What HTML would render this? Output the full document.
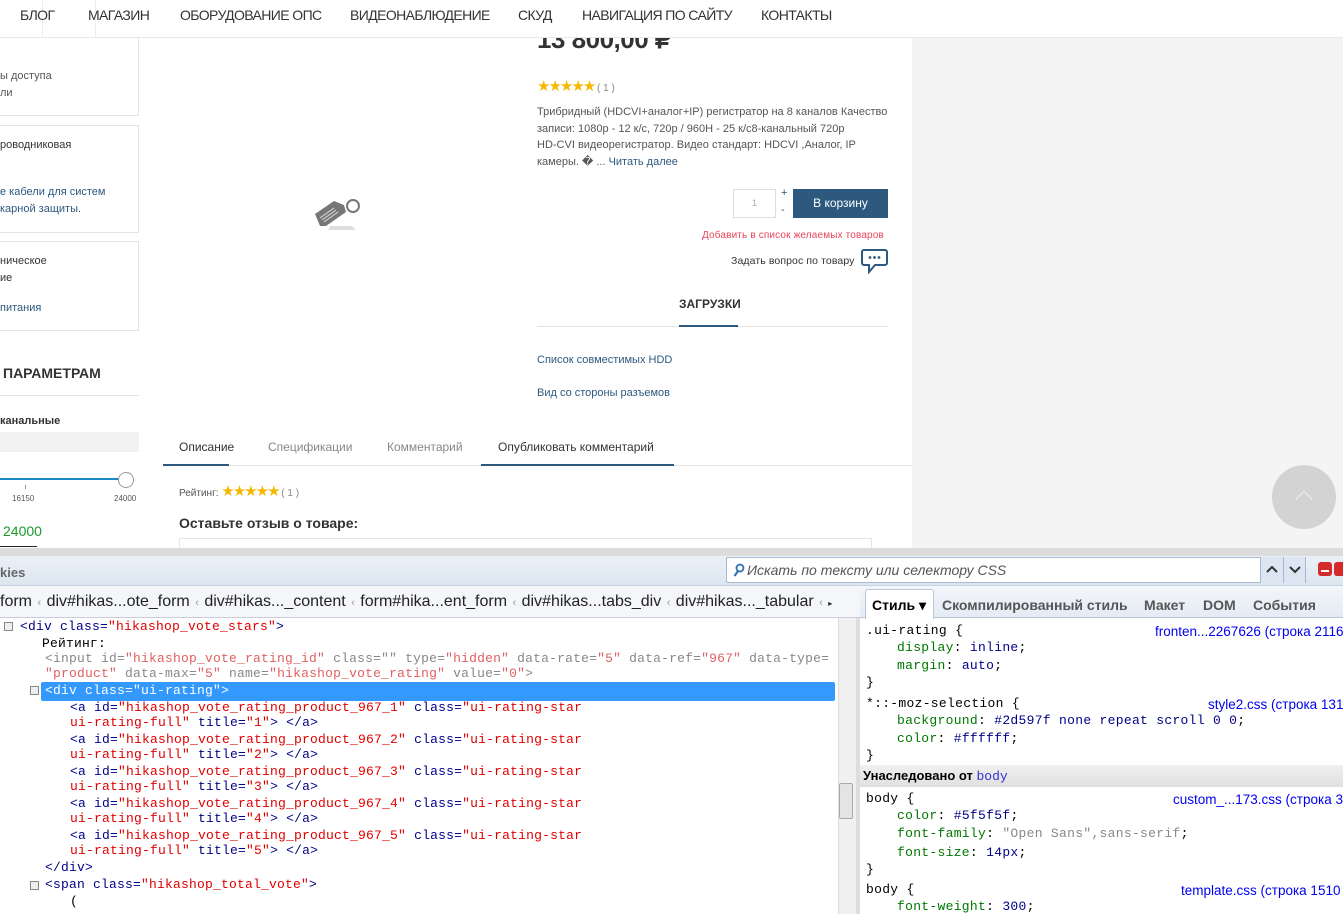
<!DOCTYPE html>
<html><head><meta charset="utf-8">
<style>
*{margin:0;padding:0;box-sizing:border-box}
body{width:1343px;height:914px;overflow:hidden;background:#fff;font-family:"Liberation Sans",sans-serif;position:relative}
.a{position:absolute;white-space:nowrap}
.nav{font-size:14px;color:#333;top:7px;letter-spacing:-0.6px}
.s{font-size:11px;color:#555}
.lnk{color:#2d597f}
.box{position:absolute;border:1px solid #e5e5e5;border-left:none;background:#fff}
.star{color:#f5b800;font-size:15px;letter-spacing:-2px}
.code{font-family:"Liberation Mono",monospace;font-size:13px;letter-spacing:0.2px;color:#000088;position:absolute;white-space:nowrap;line-height:16px}
.r{color:#e00000}
.css{font-family:"Liberation Mono",monospace;font-size:13px;letter-spacing:0.3px;position:absolute;white-space:nowrap;color:#000}
.p{color:#007700}.v{color:#000088}
.src{font-family:"Liberation Sans",sans-serif;color:#0000ee;font-size:13.5px;position:absolute;white-space:nowrap}
.sep{color:#999;font-size:11px}
</style></head><body>
<div class="a" style="left:912px;top:38px;width:431px;height:510px;background:#f4f4f4"></div>
<div class="a" style="left:1272px;top:465px;width:64px;height:64px;border-radius:50%;background:#d3d3d3"></div>
<div class="a" style="left:1298px;top:493px;width:12px;height:12px;border-left:1px solid #eee;border-top:1px solid #eee;transform:rotate(45deg)"></div>
<!-- nav -->
<div class="a" style="left:0;top:0;width:1343px;height:38px;border-bottom:1px solid #e8e8e8;background:#fff"></div>
<div class="a" style="left:42px;top:0;width:1px;height:37px;background:#eee"></div>
<div class="a" style="left:95px;top:0;width:1px;height:37px;background:#eee"></div>
<div class="a nav" style="left:20px">БЛОГ</div>
<div class="a nav" style="left:88px">МАГАЗИН</div>
<div class="a nav" style="left:180px">ОБОРУДОВАНИЕ ОПС</div>
<div class="a nav" style="left:350px">ВИДЕОНАБЛЮДЕНИЕ</div>
<div class="a nav" style="left:518px">СКУД</div>
<div class="a nav" style="left:582px">НАВИГАЦИЯ ПО САЙТУ</div>
<div class="a nav" style="left:761px">КОНТАКТЫ</div>
<!-- left column -->
<div class="box" style="left:0;top:38px;width:139px;height:78px;border-top:none"></div>
<div class="a s" style="left:0;top:70px">ы доступа</div>
<div class="a s" style="left:0;top:87px">ли</div>
<div class="box" style="left:0;top:125px;width:139px;height:108px"></div>
<div class="a s" style="left:0;top:139px;color:#333">роводниковая</div>
<div class="a s lnk" style="left:0;top:186px">е кабели для систем</div>
<div class="a s lnk" style="left:0;top:203px">карной защиты.</div>
<div class="box" style="left:0;top:241px;width:139px;height:90px"></div>
<div class="a s" style="left:0;top:255px;color:#333">ническое</div>
<div class="a s" style="left:0;top:272px;color:#333">ие</div>
<div class="a s lnk" style="left:0;top:302px">питания</div>
<div class="a" style="left:3px;top:365px;font-size:14px;font-weight:bold;color:#333">ПАРАМЕТРАМ</div>
<div class="a" style="left:0;top:395px;width:139px;height:1px;background:#e5e5e5"></div>
<div class="a s" style="left:0;top:415px;color:#333;font-weight:bold">канальные</div>
<div class="a" style="left:0;top:432px;width:139px;height:20px;background:#f2f2f2"></div>
<div class="a" style="left:0;top:478px;width:126px;height:2px;background:#1a8ac6"></div>
<div class="a" style="left:118px;top:472px;width:16px;height:16px;border-radius:50%;background:#fff;border:1px solid #999"></div>
<div class="a" style="left:25px;top:485px;width:1px;height:4px;background:#999"></div>
<div class="a" style="left:12px;top:494px;font-size:8px;color:#555">16150</div>
<div class="a" style="left:114px;top:494px;font-size:8px;color:#555">24000</div>
<div class="a" style="left:3px;top:523px;font-size:14px;color:#1a9a2a">24000</div>
<div class="a" style="left:0;top:546px;width:37px;height:1px;background:#222"></div>
<!-- product image -->
<svg class="a" style="left:312px;top:196px" width="52" height="34" viewBox="0 0 52 34"><path d="M18 30 L40 30 L44 34 L16 34Z" fill="#ddd"/><path d="M3 18 L22 5 L32 9 L34 16 L14 30 L8 30Z" fill="#777"/><path d="M8 22l14-10M10 24l14-10M12 26l14-10" stroke="#ddd" stroke-width="1"/><circle cx="41" cy="10" r="6" fill="none" stroke="#777" stroke-width="2"/></svg>
<!-- product info -->
<div class="a" style="left:537px;top:38px;width:200px;height:18px;overflow:hidden"><div style="position:absolute;left:0;top:-14px;font-size:26px;font-weight:bold;color:#333;letter-spacing:-0.5px">13 800,00 ₽</div></div>
<div class="a" style="left:537px;top:77px"><span class="star">★★★★★</span><span style="font-size:10px;color:#888"> ( 1 )</span></div>
<div class="a" style="left:537px;top:104px;font-size:11px;color:#555;line-height:16.5px">Трибридный (HDCVI+аналог+IP) регистратор на 8 каналов Качество<br>записи: 1080p - 12 к/с, 720p / 960H - 25 к/с8-канальный 720p<br>HD-CVI видеорегистратор. Видео стандарт: HDCVI ,Аналог, IP<br>камеры. � ... <span class="lnk">Читать далее</span></div>
<div class="a" style="left:733px;top:189px;width:43px;height:29px;border:1px solid #ddd;font-size:9px;color:#aaa;text-align:center;line-height:27px">1</div>
<div class="a" style="left:781px;top:187px;font-size:11px;color:#2d597f">+</div>
<div class="a" style="left:781px;top:204px;font-size:11px;color:#2d597f">-</div>
<div class="a" style="left:793px;top:189px;width:95px;height:29px;background:#2d597f;color:#fff;font-size:12px;text-align:center;line-height:29px">В корзину</div>
<div class="a" style="left:702px;top:230px;font-size:10px;color:#e8445a;letter-spacing:0.15px">Добавить в список желаемых товаров</div>
<div class="a" style="left:731px;top:255px;font-size:10.5px;color:#333;letter-spacing:0.1px">Задать вопрос по товару</div>
<svg class="a" style="left:861px;top:248px" width="27" height="26" viewBox="0 0 27 26"><path d="M3 2h21a2 2 0 0 1 2 2v11a2 2 0 0 1-2 2H14l-6 7v-7H3a2 2 0 0 1-2-2V4a2 2 0 0 1 2-2z" fill="#fff" stroke="#2d597f" stroke-width="2"/><circle cx="9" cy="9.5" r="1.4" fill="#2d597f"/><circle cx="13.5" cy="9.5" r="1.4" fill="#2d597f"/><circle cx="18" cy="9.5" r="1.4" fill="#2d597f"/></svg>
<div class="a" style="left:679px;top:297px;font-size:12px;font-weight:bold;color:#333">ЗАГРУЗКИ</div>
<div class="a" style="left:537px;top:326px;width:351px;height:1px;background:#e5e5e5"></div>
<div class="a" style="left:679px;top:325px;width:59px;height:2px;background:#2d597f"></div>
<div class="a s lnk" style="left:537px;top:354px">Список совместимых HDD</div>
<div class="a s lnk" style="left:537px;top:387px">Вид со стороны разъемов</div>
<!-- tabs -->
<div class="a" style="left:163px;top:465px;width:749px;height:1px;background:#e5e5e5"></div>
<div class="a" style="left:163px;top:464px;width:66px;height:2px;background:#2d597f"></div>
<div class="a" style="left:481px;top:464px;width:193px;height:2px;background:#2d597f"></div>
<div class="a" style="left:179px;top:440px;font-size:12px;color:#333">Описание</div>
<div class="a" style="left:268px;top:440px;font-size:12px;color:#888">Спецификации</div>
<div class="a" style="left:387px;top:440px;font-size:12px;color:#888">Комментарий</div>
<div class="a" style="left:498px;top:440px;font-size:12px;color:#333">Опубликовать комментарий</div>
<div class="a" style="left:179px;top:482px;font-size:10px;color:#555">Рейтинг: <span class="star">★★★★★</span><span style="color:#888"> ( 1 )</span></div>
<div class="a" style="left:179px;top:515px;font-size:14px;font-weight:bold;color:#333">Оставьте отзыв о товаре:</div>
<div class="a" style="left:179px;top:538px;width:693px;height:12px;border:1px solid #e5e5e5"></div>
<!-- devtools -->
<div class="a" style="left:0;top:548px;width:1343px;height:8px;background:#dcdcdc"></div>
<div class="a" style="left:0;top:556px;width:1343px;height:30px;background:linear-gradient(#eaf0f7,#dde6f0);border-bottom:1px solid #c8d4e2"></div>
<div class="a" style="left:0;top:565px;font-size:13px;font-weight:bold;color:#666">kies</div>
<div class="a" style="left:726px;top:557px;width:580px;height:26px;background:#fff;border:1px solid #a9b8cc;border-radius:2px"></div>
<svg class="a" style="left:733px;top:563px" width="12" height="14" viewBox="0 0 12 14"><circle cx="7" cy="5" r="3.5" fill="none" stroke="#2d6fb0" stroke-width="1.8"/><path d="M5 8L1.5 13" stroke="#2d6fb0" stroke-width="2"/></svg>
<div class="a" style="left:747px;top:562px;font-size:14px;font-style:italic;color:#555">Искать по тексту или селектору CSS</div>
<div class="a" style="left:1260px;top:557px;width:46px;height:26px;background:#dbe6f2;border-left:1px solid #a9b8cc;border-right:1px solid #a9b8cc"></div>
<svg class="a" style="left:1266px;top:565px" width="12" height="8"><path d="M1 7l5-5 5 5" fill="none" stroke="#333" stroke-width="2"/></svg>
<div class="a" style="left:1283px;top:557px;width:1px;height:26px;background:#a9b8cc"></div>
<svg class="a" style="left:1289px;top:566px" width="12" height="8"><path d="M1 1l5 5 5-5" fill="none" stroke="#333" stroke-width="2"/></svg>
<div class="a" style="left:1318px;top:562px;width:14px;height:14px;background:#d42a2a;border-radius:3px"></div>
<div class="a" style="left:1321px;top:570px;width:8px;height:2px;background:#fff"></div>
<div class="a" style="left:1334px;top:562px;width:14px;height:14px;background:#d42a2a;border-radius:3px"></div>
<div class="a" style="left:0;top:586px;width:860px;height:32px;background:#f4f6fa;border-bottom:1px solid #ccd"></div>
<div class="a" style="left:0;top:593px;font-size:16px;color:#222;word-spacing:1px">form <span class="sep">‹</span> div#hikas...ote_form <span class="sep">‹</span> div#hikas..._content <span class="sep">‹</span> form#hika...ent_form <span class="sep">‹</span> div#hikas...tabs_div <span class="sep">‹</span> div#hikas..._tabular <span class="sep">‹</span> <span style="font-size:8px">▸</span></div>
<div class="a" style="left:860px;top:586px;width:483px;height:32px;background:linear-gradient(#f3f6fa,#e4ebf4);border-bottom:1px solid #b8c6d8"></div>
<div class="a" style="left:865px;top:589px;width:69px;height:30px;background:#fff;border:1px solid #b8c6d8;border-bottom:none;border-radius:3px 3px 0 0"></div>
<div class="a" style="left:872px;top:597px;font-size:14px;font-weight:bold;color:#000">Стиль ▾</div>
<div class="a" style="left:942px;top:597px;font-size:14px;font-weight:bold;color:#555">Скомпилированный стиль</div>
<div class="a" style="left:1144px;top:597px;font-size:14px;font-weight:bold;color:#555">Макет</div>
<div class="a" style="left:1203px;top:597px;font-size:14px;font-weight:bold;color:#555">DOM</div>
<div class="a" style="left:1253px;top:597px;font-size:14px;font-weight:bold;color:#555">События</div>
<!-- html panel -->
<div class="a" style="left:838px;top:618px;width:18px;height:296px;background:#f0f0f0;border-left:1px solid #ddd"></div>
<div class="a" style="left:839px;top:783px;width:14px;height:36px;background:#e4e4e4;border:1px solid #aaa;border-radius:2px"></div>
<div class="a" style="left:856px;top:618px;width:4px;height:296px;background:#ddd"></div>
<div class="a" style="left:41px;top:682px;width:794px;height:19px;background:#3399ff;border-radius:2px"></div>
<div class="a" style="left:4px;top:622px;width:9px;height:9px;border:1px solid #888;background:#eee"></div>
<div class="a" style="left:30px;top:686px;width:9px;height:9px;border:1px solid #888;background:#eee"></div>
<div class="a" style="left:30px;top:881px;width:9px;height:9px;border:1px solid #888;background:#eee"></div>
<div class="code" style="left:20px;top:619px">&lt;div class=<span class="r">"hikashop_vote_stars"</span>&gt;</div>
<div class="code" style="left:42px;top:636px;color:#000">Рейтинг:</div>
<div class="code" style="left:45px;top:651px;color:#888">&lt;input id=<span style="color:#e06060">"hikashop_vote_rating_id"</span> class="" type=<span style="color:#e06060">"hidden"</span> data-rate=<span style="color:#e06060">"5"</span> data-ref=<span style="color:#e06060">"967"</span> data-type=</div>
<div class="code" style="left:45px;top:666px;color:#888"><span style="color:#e06060">"product"</span> data-max=<span style="color:#e06060">"5"</span> name=<span style="color:#e06060">"hikashop_vote_rating"</span> value=<span style="color:#e06060">"0"</span>&gt;</div>
<div class="code" style="left:45px;top:683px;color:#fff">&lt;div class="ui-rating"&gt;</div>
<div class="code" style="left:70px;top:700px">&lt;a id=<span class="r">"hikashop_vote_rating_product_967_1"</span> class=<span class="r">"ui-rating-star</span></div>
<div class="code" style="left:70px;top:715px"><span class="r">ui-rating-full"</span> title=<span class="r">"1"</span>&gt; &lt;/a&gt;</div>
<div class="code" style="left:70px;top:732px">&lt;a id=<span class="r">"hikashop_vote_rating_product_967_2"</span> class=<span class="r">"ui-rating-star</span></div>
<div class="code" style="left:70px;top:747px"><span class="r">ui-rating-full"</span> title=<span class="r">"2"</span>&gt; &lt;/a&gt;</div>
<div class="code" style="left:70px;top:764px">&lt;a id=<span class="r">"hikashop_vote_rating_product_967_3"</span> class=<span class="r">"ui-rating-star</span></div>
<div class="code" style="left:70px;top:779px"><span class="r">ui-rating-full"</span> title=<span class="r">"3"</span>&gt; &lt;/a&gt;</div>
<div class="code" style="left:70px;top:796px">&lt;a id=<span class="r">"hikashop_vote_rating_product_967_4"</span> class=<span class="r">"ui-rating-star</span></div>
<div class="code" style="left:70px;top:811px"><span class="r">ui-rating-full"</span> title=<span class="r">"4"</span>&gt; &lt;/a&gt;</div>
<div class="code" style="left:70px;top:828px">&lt;a id=<span class="r">"hikashop_vote_rating_product_967_5"</span> class=<span class="r">"ui-rating-star</span></div>
<div class="code" style="left:70px;top:843px"><span class="r">ui-rating-full"</span> title=<span class="r">"5"</span>&gt; &lt;/a&gt;</div>
<div class="code" style="left:45px;top:860px">&lt;/div&gt;</div>
<div class="code" style="left:45px;top:877px">&lt;span class=<span class="r">"hikashop_total_vote"</span>&gt;</div>
<div class="code" style="left:70px;top:894px;color:#000">(</div>
<!-- css panel -->
<div class="css" style="left:866px;top:623px">.ui-rating {</div>
<div class="css" style="left:897px;top:640px"><span class="p">display</span>: <span class="v">inline</span>;</div>
<div class="css" style="left:897px;top:658px"><span class="p">margin</span>: <span class="v">auto</span>;</div>
<div class="css" style="left:866px;top:675px">}</div>
<div class="src" style="left:1155px;top:624px">fronten...2267626 (строка 2116</div>
<div class="css" style="left:866px;top:696px">*::-moz-selection {</div>
<div class="src" style="left:1208px;top:697px">style2.css (строка 131</div>
<div class="css" style="left:897px;top:713px"><span class="p">background</span>: <span class="v">#2d597f none repeat scroll 0 0</span>;</div>
<div class="css" style="left:897px;top:731px"><span class="p">color</span>: <span class="v">#ffffff</span>;</div>
<div class="css" style="left:866px;top:748px">}</div>
<div class="a" style="left:860px;top:765px;width:483px;height:22px;background:linear-gradient(#f0f0f0,#e0e0e0)"></div>
<div class="a" style="left:863px;top:768px;font-size:13px;font-weight:bold;color:#000">Унаследовано от <span style="font-family:'Liberation Mono',monospace;font-weight:normal;color:#3333cc">body</span></div>
<div class="css" style="left:866px;top:791px">body {</div>
<div class="src" style="left:1173px;top:792px">custom_...173.css (строка 3</div>
<div class="css" style="left:897px;top:808px"><span class="p">color</span>: <span class="v">#5f5f5f</span>;</div>
<div class="css" style="left:897px;top:826px"><span class="p">font-family</span>: <span style="color:#888">"Open Sans",sans-serif</span>;</div>
<div class="css" style="left:897px;top:845px"><span class="p">font-size</span>: <span class="v">14px</span>;</div>
<div class="css" style="left:866px;top:862px">}</div>
<div class="css" style="left:866px;top:882px">body {</div>
<div class="src" style="left:1181px;top:883px">template.css (строка 1510</div>
<div class="css" style="left:897px;top:899px"><span class="p">font-weight</span>: <span class="v">300</span>;</div>
</body></html>
